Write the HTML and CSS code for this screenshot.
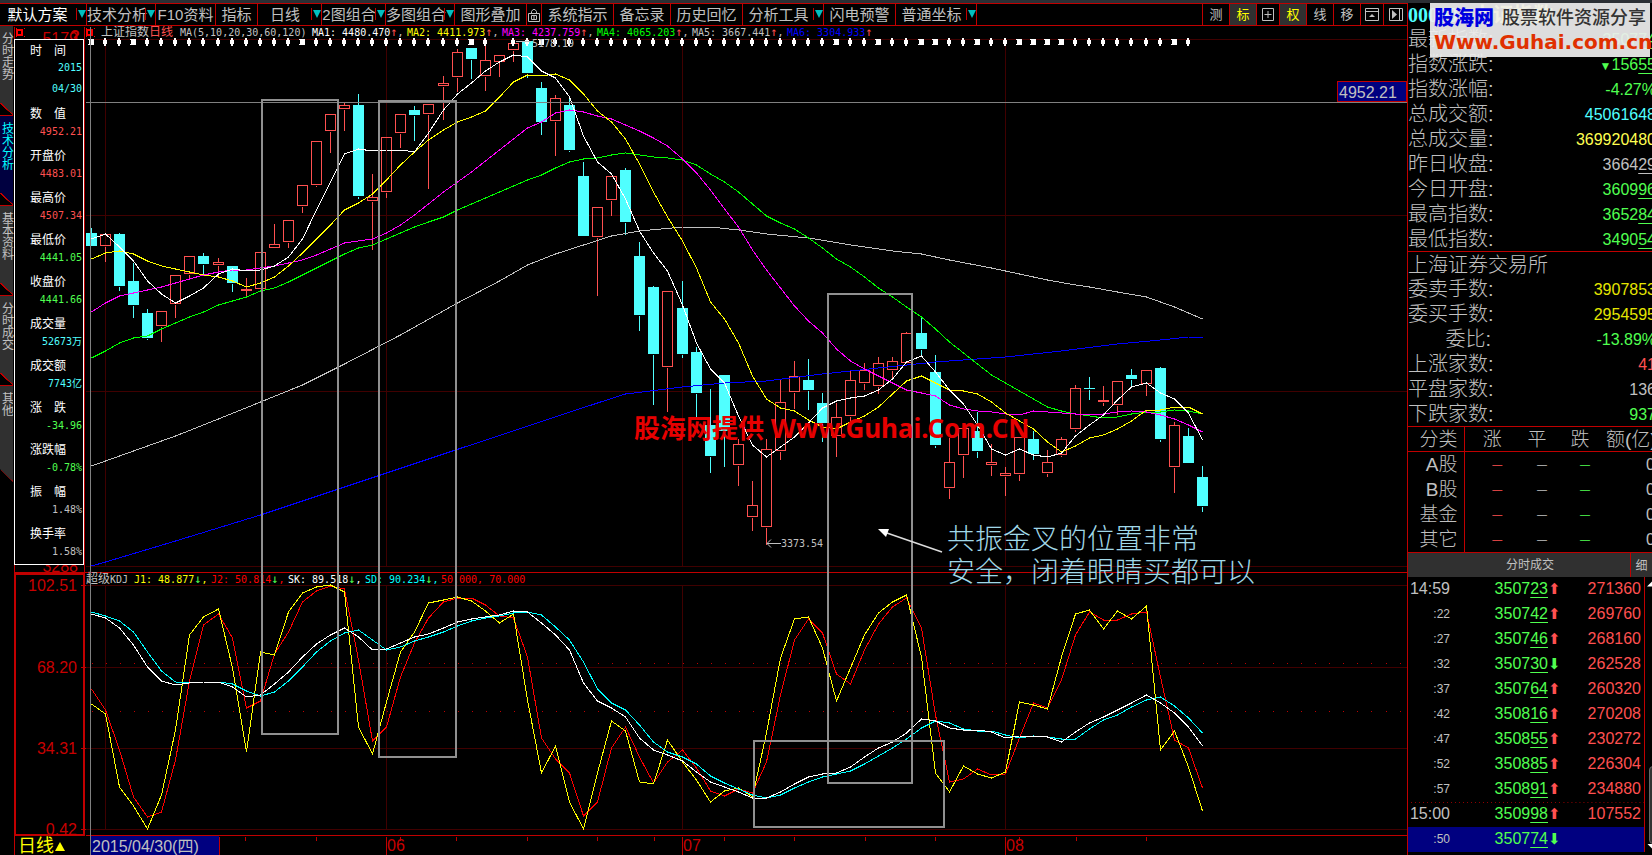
FILE: index.html
```html
<!DOCTYPE html>
<html lang="zh-CN">
  <head>
    <meta charset="utf-8">
    <title>上证指数 日线</title>
    <link rel="stylesheet" href="styles.css">
  </head>
  <body>
    <div class="app">
      <main class="main">
        <nav class="toolbar">
          <button class="drop on">默认方案</button>
          <button class="drop">技术分析</button>
          <button>F10资料</button>
          <button>指标</button>
          <button class="drop">日线</button>
          <button class="drop">2图组合</button>
          <button class="drop">多图组合</button>
          <button>图形叠加</button>
          <button aria-label="锁定"><svg width="12" height="14" viewBox="0 0 12 14"><path d="M3.5 6V3.5L5 1.500h2L8.500 3.500V6M.5 5.500h11v8H.5zM3.500 7.500h5v4h-5zM6 8v3" /></svg></button>
          <button>系统指示</button>
          <button>备忘录</button>
          <button>历史回忆</button>
          <button class="drop">分析工具</button>
          <button>闪电预警</button>
          <button class="drop">普通坐标</button>
          <span></span>
          <button class="small">测</button>
          <button class="small pressed">标</button>
          <button aria-label="四分"><svg width="12" height="13" viewBox="0 0 12 13"><path d="M.5.500h11v12H.5zM6 3v7M2.500 6.500h7" /></svg></button>
          <button class="small pressed">权</button>
          <button class="small">线</button>
          <button class="small">移</button>
          <button aria-label="展开"><svg width="14" height="13" viewBox="0 0 14 13"><path d="M.5.500h13v12H.5zM.5 3.500h13" /><path class="fill" d="M4 9l3-3 3 3z" /></svg></button>
          <button aria-label="右侧"><svg width="14" height="13" viewBox="0 0 14 13"><path d="M.5.500h13v12H.5zM10.500 1v11" /><path class="fill" d="M3 2l5 4.500-5 4.500z" /></svg></button>
        </nav>

        <div class="workspace">
          <div class="tabs">
            <button>分时走势</button>
            <button class="active">技术分析</button>
            <button>基本资料</button>
            <button>分时成交</button>
            <button class="last">其他</button>
          </div>

          <div class="chart">
            <svg id="chart" viewBox="14 26 1393 829"></svg>

            <dl class="info">
              <dt>时　间</dt><dd class="cyan date">2015<br>04/30</dd>
              <dt>数　值</dt><dd class="red">4952.21</dd>
              <dt>开盘价</dt><dd class="red">4483.01</dd>
              <dt>最高价</dt><dd class="red">4507.34</dd>
              <dt>最低价</dt><dd class="green">4441.05</dd>
              <dt>收盘价</dt><dd class="green">4441.66</dd>
              <dt>成交量</dt><dd class="cyan">52673万</dd>
              <dt>成交额</dt><dd class="cyan">7743亿</dd>
              <dt>涨　跌</dt><dd class="green">-34.96</dd>
              <dt>涨跌幅</dt><dd class="green">-0.78%</dd>
              <dt>振　幅</dt><dd>1.48%</dd>
              <dt>换手率</dt><dd>1.58%</dd>
            </dl>
          </div>
        </div>
      </main>

      <aside class="quote">
        <h1><span class="code">000001</span> <span class="name">上证指数</span></h1>
        <dl class="rows">
          <div><dt>最新指数:</dt><dd class="green">3507<u>74</u></dd></div>
          <div><dt>指数涨跌:</dt><dd class="green"><small>▼</small>156<u>55</u></dd></div>
          <div><dt>指数涨幅:</dt><dd class="green">-4.27%</dd></div>
          <div><dt>总成交额:</dt><dd class="cyan">45061648</dd></div>
          <div><dt>总成交量:</dt><dd class="lemon">369920480</dd></div>
          <div><dt>昨日收盘:</dt><dd>3664<u>29</u></dd></div>
          <div><dt>今日开盘:</dt><dd class="green">3609<u>96</u></dd></div>
          <div><dt>最高指数:</dt><dd class="green">3652<u>84</u></dd></div>
          <div><dt>最低指数:</dt><dd class="green">3490<u>54</u></dd></div>
        </dl>
        <dl class="rows line">
          <div><dt>上海证券交易所</dt></div>
          <div><dt>委卖手数:</dt><dd class="gold">3907853</dd></div>
          <div><dt>委买手数:</dt><dd class="gold">2954595</dd></div>
          <div><dt>委比:</dt><dd class="green">-13.89%</dd></div>
          <div><dt>上涨家数:</dt><dd class="red">41</dd></div>
          <div><dt>平盘家数:</dt><dd>136</dd></div>
          <div><dt>下跌家数:</dt><dd class="green">937</dd></div>
        </dl>

        <table class="types">
          <thead><tr><th>分类</th><th>涨</th><th>平</th><th>跌</th><th>额(亿)</th></tr></thead>
          <tbody>
            <tr><th>A股</th><td class="red">—</td><td>—</td><td class="green">—</td><td>0</td></tr>
            <tr><th>B股</th><td class="red">—</td><td>—</td><td class="green">—</td><td>0</td></tr>
            <tr><th>基金</th><td class="red">—</td><td>—</td><td class="green">—</td><td>0</td></tr>
            <tr><th>其它</th><td class="red">—</td><td>—</td><td class="green">—</td><td>0</td></tr>
          </tbody>
        </table>

        <div class="ticks-head"><h2>分时成交</h2><button>细</button></div>
        <div class="ticks">
          <table>
            <tr><td class="min">14:59</td><td>3507<u>23</u></td><td class="red">⬆</td><td>271360</td></tr>
            <tr><td>:22</td><td>3507<u>42</u></td><td class="red">⬆</td><td>269760</td></tr>
            <tr><td>:27</td><td>3507<u>46</u></td><td class="red">⬆</td><td>268160</td></tr>
            <tr><td>:32</td><td>3507<u>30</u></td><td class="green">⬇</td><td>262528</td></tr>
            <tr><td>:37</td><td>3507<u>64</u></td><td class="red">⬆</td><td>260320</td></tr>
            <tr><td>:42</td><td>3508<u>16</u></td><td class="red">⬆</td><td>270208</td></tr>
            <tr><td>:47</td><td>3508<u>55</u></td><td class="red">⬆</td><td>230272</td></tr>
            <tr><td>:52</td><td>3508<u>85</u></td><td class="red">⬆</td><td>226304</td></tr>
            <tr><td>:57</td><td>3508<u>91</u></td><td class="red">⬆</td><td>234880</td></tr>
            <tr class="minute"><td class="min">15:00</td><td>3509<u>98</u></td><td class="red">⬆</td><td>107552</td></tr>
            <tr class="current"><td>:50</td><td>3507<u>74</u></td><td class="green">⬇</td><td></td></tr>
          </table>
          <div class="scroll"><i class="up"></i><i class="thumb"></i><i class="down"></i></div>
        </div>

        <div class="logo">
          <p><b>股海网</b><span>股票软件资源分享</span></p>
          <a href="#">Www.Guhai.com.cn</a>
        </div>
      </aside>
    </div>

    <script src="chart.js"></script>
  </body>
</html>
```
FILE: styles.css
```css
* {
  box-sizing: border-box;
}
body {
  margin: 0;
  background: #000;
  color: #c0c0c0;
  font-family: "Liberation Sans", "Noto Sans CJK SC", sans-serif;
  font-size: 16px;
}
button {
  margin: 0;
  padding: 0;
  border: 0;
  background: none;
  color: inherit;
  font: inherit;
}
dl, dd, h1, h2, p {
  margin: 0;
}
u {
  text-underline-offset: 3px;
  text-decoration-thickness: 1px;
}
.red { color: #ff5050; }
.green { color: #50ff50; }
.cyan { color: #50ffff; }
.lemon { color: #ffff50; }
.gold { color: #e6e600; }

.app {
  display: flex;
  align-items: stretch;
  border-top: 3px solid #2b2f34;
}
.main {
  flex: 1;
  min-width: 0;
}

/* toolbar */
.toolbar {
  display: grid;
  grid-template-columns: 87px 69px 60px 42px 64px 64px 69px 72px 15px 72px 57px 72px 81px 72px 81px 1fr 27px 27px 23px 27px 27px 27px 23px 23px;
  height: 23px;
  border-top: 1px solid #c00000;
  border-bottom: 1px solid #c00000;
}
.toolbar button {
  position: relative;
  border-right: 1px solid #c00000;
  font-size: 15px;
  line-height: 21px;
  white-space: nowrap;
}
.toolbar span {
  border-right: 1px solid #c00000;
}
.toolbar button:last-child {
  border-right: 0;
}
.toolbar .drop {
  padding-right: 9px;
}
.toolbar .on {
  padding-right: 11px;
  color: #fff;
}
.toolbar .drop::before {
  content: "";
  position: absolute;
  right: 9px;
  top: 4px;
  height: 12px;
  border-left: 1px solid #c00000;
}
.toolbar .drop::after {
  content: "";
  position: absolute;
  right: 0;
  top: 6px;
  border: 4px solid transparent;
  border-top: 8px solid #00c0c0;
  border-bottom: 0;
}
.toolbar .small {
  font-size: 13px;
}
.toolbar .pressed {
  background: #303030;
  color: #ffff00;
}
.toolbar svg {
  display: block;
  margin: auto;
  fill: none;
  stroke: #c0c0c0;
}
.toolbar .fill {
  fill: #c0c0c0;
  stroke: none;
}

/* side tabs */
.workspace {
  display: flex;
}
.tabs {
  width: 14px;
}
.tabs button {
  display: block;
  position: relative;
  width: 13px;
  height: 90px;
  padding-top: 6px;
  background: #303030;
  border-bottom: 1px solid #c00000;
  font-size: 12px;
  line-height: 12px;
  writing-mode: vertical-lr;
  text-align: left;
}
.tabs .active {
  background: #000040;
  color: #00ffff;
}
.tabs .last {
  height: 96px;
  border: 0;
  clip-path: polygon(0 0, 100% 0, 100% 100%, 0 83px);
}
.tabs button::after {
  content: "";
  position: absolute;
  left: 0;
  bottom: 0;
  width: 13px;
  height: 12px;
  background: linear-gradient(to top right, #000 47%, #c00000 48%, #c00000 54%, transparent 55%);
}

/* chart */
.chart {
  position: relative;
  flex: 1;
  min-width: 0;
}
.chart svg {
  display: block;
  width: 100%;
  height: auto;
}
.chart text {
  font-family: "Liberation Sans", "Noto Sans CJK SC", sans-serif;
  font-size: 16px;
  fill: #c0c0c0;
}
.chart text.legend {
  font-family: "DejaVu Sans Mono", "Noto Sans CJK SC", monospace;
  font-size: 10px;
  white-space: pre;
}
.chart .legend .cn {
  font-size: 12px;
}
.chart .legend .arrow {
  font-size: 12px;
}
.chart text.scale {
  fill: #c80000;
}
.chart text.note {
  font-size: 28px;
  font-weight: 300;
  fill: #a0d8e8;
}
.chart text.mark {
  font-family: "Noto Sans", "Noto Sans CJK SC", sans-serif;
  font-size: 26px;
  font-weight: 700;
  fill: #e60000;
}
.chart text.period {
  font-size: 18px;
  fill: #ffff00;
}
.crisp {
  shape-rendering: crispEdges;
}
.info {
  position: absolute;
  left: 0;
  top: 13px;
  width: 70px;
  height: 526px;
  padding-top: 3px;
  border: 1px solid #fff;
  background: #000;
  font-family: "DejaVu Sans Mono", "Noto Sans CJK SC", monospace;
  font-size: 10px;
  line-height: 17px;
}
.info dt {
  padding-left: 15px;
  color: #fff;
  font-size: 12px;
  line-height: 17px;
}
.info dd {
  height: 25px;
  padding-right: 1px;
  text-align: right;
  white-space: nowrap;
}
.info .date {
  height: 49px;
  margin-top: -3px;
  line-height: 21px;
}

/* quote panel */
.quote {
  position: relative;
  width: 245px;
  overflow: hidden;
  border-left: 1px solid #c00000;
}
.quote h1 {
  height: 23px;
  font: bold 20px/24px "Liberation Serif", "Noto Sans CJK SC", serif;
  white-space: nowrap;
}
.quote .code {
  color: #50ffff;
}
.quote .name {
  color: #ffff50;
}
.rows div {
  display: flex;
  justify-content: space-between;
  height: 25px;
  line-height: 27px;
  margin-right: -4px;
}
.rows dt {
  width: 83px;
  font-size: 20px;
  font-weight: 300;
  text-align: right;
  white-space: nowrap;
}
.rows small {
  font-size: 12px;
}
.line {
  border-top: 1px solid #c00000;
}
.line div:first-child {
  height: 24px;
}
.line div:first-child dt {
  width: auto;
}
.types {
  width: 260px;
  table-layout: fixed;
  border-collapse: collapse;
}
.types tr {
  height: 25px;
}
.types thead tr {
  border-top: 1px solid #c00000;
  border-bottom: 1px solid #c00000;
}
.types th, .types td {
  height: 25px;
  padding: 2px 0 0;
  line-height: 22px;
  font-weight: 300;
  white-space: nowrap;
}
.types th {
  width: 56px;
  font-size: 19px;
}
.types td {
  padding-left: 10px;
  font-size: 10px;
  text-align: center;
}
.types th:first-child {
  padding-right: 6px;
  border-right: 1px solid #c00000;
  text-align: right;
}
.types th:nth-child(3) { width: 34px; }
.types th:nth-child(4) { width: 52px; }
.types th:last-child {
  width: auto;
  text-align: left;
}
.types td:last-child {
  padding-left: 40px;
  font-size: 16px;
  text-align: left;
}
.ticks-head {
  display: flex;
  height: 25px;
  border-top: 1px solid #c00000;
  background: #303030;
}
.ticks-head h2 {
  flex: 1;
  padding-left: 22px;
  font-size: 12px;
  font-weight: 400;
  line-height: 24px;
  text-align: center;
}
.ticks-head button {
  width: 22px;
  border-left: 1px solid #c00000;
  font-size: 12px;
}
.ticks {
  display: flex;
}
.ticks table {
  width: 236px;
  border-collapse: collapse;
}
.ticks td {
  height: 25px;
  padding: 0;
  line-height: 24px;
  color: #50ff50;
  text-align: right;
}
.ticks td:first-child {
  width: 42px;
  color: #c0c0c0;
  font-size: 12px;
}
.ticks td.min {
  font-size: 16px;
}
.ticks td:nth-child(2) {
  width: 98px;
}
.ticks td:nth-child(3) {
  width: 12px;
  font-family: "DejaVu Sans", sans-serif;
  font-size: 15px;
}
.ticks td.red,
.ticks td:last-child {
  color: #ff5050;
}
.ticks td:last-child {
  padding-right: 3px;
}
.ticks .minute {
  background: linear-gradient(to right, #900000 1px, transparent 1px) 3px 0 / 4px 1px repeat-x;
}
.ticks .current {
  background: #000080;
}
.scroll {
  position: relative;
  flex: 1;
  border-left: 1px solid #c00000;
}
.scroll i {
  position: absolute;
  left: 2px;
  width: 16px;
  height: 8px;
  background: #fff;
}
.scroll .up {
  top: 2px;
  clip-path: polygon(0 100%, 50% 0, 100% 100%);
}
.scroll .down {
  bottom: 0;
  clip-path: polygon(0 0, 100% 0, 50% 100%);
}
.scroll .thumb {
  left: 4px;
  top: 189px;
  height: 78px;
  border: 1px solid #666;
  border-radius: 4px;
  background: #333;
}

/* site logo over the panel */
.logo {
  position: absolute;
  right: 2px;
  top: -1px;
  width: 220px;
  height: 55px;
  padding: 3px 4px;
  background: rgba(238, 238, 238, 0.93);
  white-space: nowrap;
}
.logo p {
  display: flex;
  justify-content: space-between;
  height: 26px;
  line-height: 26px;
}
.logo b {
  color: #0000e0;
  font-size: 20px;
  font-weight: 900;
}
.logo span {
  color: #333;
  font-size: 18px;
  font-weight: 500;
}
.logo a {
  display: block;
  color: #e03000;
  font: bold 20px/22px "DejaVu Sans", sans-serif;
  text-decoration: none;
}
```
FILE: chart.js
```js
var svg = document.getElementById("chart");
var STEP = 14.06;
var html = "";

// up/down, high, body top, body bottom, low
var candles = [
  ["d",227,233,246,246], ["u",232,234,246,261], ["d",232,234,286,290], ["d",262,281,305,317],
  ["d",308,313,338,339], ["u",310,311,326,341], ["u",275,275,304,317], ["u",256,256,274,279],
  ["d",252,256,264,273], ["u",257,262,265,277], ["d",266,266,283,291], ["u",277,289,290,296],
  ["u",251,252,289,289], ["u",223,244,248,248], ["u",220,220,242,247], ["u",184,185,206,212],
  ["u",141,141,185,186], ["u",114,114,131,152], ["u",101,105,109,130], ["d",93,105,196,198],
  ["u",173,197,201,249], ["u",137,137,192,197], ["u",114,114,133,147], ["d",105,110,115,140],
  ["u",104,104,114,188], ["u",75,83,86,119], ["u",48,52,77,91], ["d",48,48,59,78],
  ["u",43,60,76,90], ["u",55,55,62,76], ["u",42,43,50,61], ["d",41,41,73,77],
  ["d",81,88,122,134], ["u",94,98,121,155], ["d",97,105,150,151], ["d",161,176,236,236],
  ["u",207,207,237,295], ["u",175,176,200,215], ["d",167,170,222,234], ["d",241,256,315,330],
  ["d",285,287,354,404], ["u",290,291,367,411], ["d",280,308,354,357], ["d",346,352,393,416],
  ["d",388,425,456,472], ["d",375,375,431,466], ["u",438,444,465,485], ["u",480,505,517,530],
  ["u",438,449,527,544], ["u",379,402,451,459], ["u",360,376,392,408], ["d",358,380,390,409],
  ["d",392,403,423,441], ["u",402,417,436,456], ["u",370,380,416,420], ["u",362,370,383,389],
  ["u",356,363,386,393], ["u",356,361,370,377], ["u",331,333,363,363], ["d",316,333,349,356],
  ["d",354,372,445,447], ["u",437,462,488,498], ["u",428,428,455,477], ["d",411,431,451,457],
  ["u",443,462,465,475], ["u",466,473,476,495], ["u",437,437,474,480], ["d",430,439,454,459],
  ["u",449,462,473,476], ["u",436,439,455,456], ["u",384,388,429,431], ["d",376,388,389,399],
  ["u",385,400,402,405], ["u",380,381,405,414], ["d",368,375,379,386], ["u",369,370,384,395],
  ["d",366,368,439,441], ["u",421,425,467,492], ["d",427,436,463,463], ["d",465,477,506,511]
];

var ma5 = [239,234,247,261,281,294,303,296,288,274,269,271,270,266,257,239,210,182,154,149,151,150,150,152,133,110,94,83,71,62,55,57,71,78,97,136,162,174,199,231,253,271,305,343,369,383,416,445,457,447,437,423,408,401,398,396,390,379,362,356,372,390,404,425,449,455,449,455,457,453,436,425,415,400,387,383,393,399,413,440];
var ma10 = [259,253,251,254,261,266,269,272,275,277,281,287,283,277,266,253,239,225,210,203,194,180,165,152,140,130,122,117,111,97,82,75,76,74,80,94,111,122,139,164,192,217,241,268,302,319,343,376,399,408,411,420,427,429,422,416,407,394,381,376,383,390,391,394,402,413,421,429,442,452,446,438,435,429,421,410,410,407,407,414];
var ma20 = [312,303,296,293,290,287,283,279,275,272,270,270,268,266,263,260,255,249,243,241,239,233,225,215,204,192,182,172,161,150,139,128,122,113,110,112,116,119,125,131,138,146,159,173,190,209,227,250,270,288,306,321,333,349,361,369,376,383,390,393,396,405,409,411,412,414,415,411,412,413,414,414,414,412,411,412,415,419,425,432];
var ma30 = [358,351,343,338,336,329,323,317,312,305,301,297,291,288,282,275,268,261,254,248,245,239,233,227,222,217,210,204,198,192,186,180,175,168,162,159,158,155,153,155,157,158,160,165,174,182,192,204,216,223,229,238,248,259,267,277,288,297,307,317,329,342,353,364,375,383,391,399,407,411,414,416,418,417,414,412,412,410,411,414];
// the slow averages only need a few [index, y] points
var ma60 = [[0,466],[3,451],[6,436],[9,419],[12,402],[15,385],[18,364],[22,335],[26,303],[29,281],[31,265],[33,254],[35,245],[37,236],[39,231],[42,227],[44,227],[46,230],[48,234],[51,238],[54,245],[57,251],[59,254],[61,260],[64,268],[68,280],[70,285],[71,287],[73,292],[75,297],[77,307],[79,319]];
var ma120 = [[0,566],[1,562],[6,541],[12,515],[15,501],[25,454],[36,403],[38,394],[42,387],[45,383],[48,381],[52,374],[56,368],[60,362],[65,357],[69,351],[73,344],[76,340],[78,337],[79,337]];

var j1 = [704,714,787,806,829,795,730,635,617,609,668,752,652,655,612,593,587,585,592,727,754,702,652,632,603,600,597,601,611,623,614,700,773,746,802,829,773,721,731,782,784,740,762,780,802,791,788,797,733,658,619,617,648,701,668,635,613,602,595,657,773,792,766,774,778,772,702,705,709,657,614,610,629,611,619,606,750,731,767,811];
var j2 = [689,710,750,797,817,812,760,681,625,614,638,708,701,654,632,602,591,586,589,660,741,727,677,643,618,602,598,598,605,616,618,657,738,759,773,816,802,748,727,757,783,762,750,768,791,796,789,793,762,695,640,619,633,674,684,650,624,607,598,628,715,782,779,769,775,774,738,703,708,680,635,612,620,620,614,612,677,740,748,788];
var sk = [614,618,628,645,667,681,685,683,682,682,687,697,695,684,672,657,644,635,628,637,650,649,643,637,634,628,622,619,617,615,611,612,623,635,650,683,701,708,717,738,750,755,761,772,782,787,792,798,798,792,784,777,774,773,767,757,748,742,733,719,721,728,730,730,732,738,736,736,737,742,732,723,717,710,703,695,703,713,727,746];
var sd = [612,616,621,632,652,671,682,683,682,682,684,691,696,692,681,667,652,641,633,630,640,650,647,641,637,632,626,621,618,616,613,612,615,627,640,662,689,703,710,725,742,752,757,764,776,783,789,795,798,795,788,782,777,774,771,764,756,748,739,728,721,723,729,731,731,735,738,736,737,739,739,729,720,715,707,700,697,706,718,733];

function px(i) {
  return Math.round(91 + i * STEP);
}
function line(x1, y1, x2, y2, color) {
  html += `<path class="crisp" d="M${x1 + 0.5} ${y1 + 0.5}L${x2 + 0.5} ${y2 + 0.5}" stroke="${color}" fill="none"/>`;
}
function curve(data, color) {
  var points = data.map(function (p, i) {
    return Array.isArray(p) ? px(p[0]) + 0.5 + "," + p[1] : px(i) + 0.5 + "," + p;
  });
  html += `<polyline class="crisp" points="${points.join(" ")}" stroke="${color}" fill="none"/>`;
}
function box(x, y, w, h, stroke, fill, width) {
  html += `<rect class="crisp" x="${x}" y="${y}" width="${w}" height="${h}" stroke="${stroke}" fill="${fill}" stroke-width="${width || 1}"/>`;
}
function text(x, y, str, cls, extra) {
  html += `<text x="${x}" y="${y}" class="${cls || ""}" ${extra || ""}>${str}</text>`;
}

// grid
[39, 215, 391, 566, 585, 667, 748, 829].forEach(function (y) {
  line(85, y, 1407, y, "#400000");
});
[105, 386, 682, 1005].forEach(function (x) {
  line(x, 40, x, 566, "#400000");
  line(x, 585, x, 829, "#400000");
});
for (var i = 0; i < 94; i++) {
  line(px(i), 663, px(i) + 1, 663, "#c00000");
  line(px(i), 711, px(i) + 1, 711, "#c00000");
}

// axes
line(84, 26, 84, 835, "#c00000");
line(14, 26, 14, 855, "#c00000");
line(14, 572, 1407, 572, "#c00000");
box(15, 574, 69, 261, "#c00000", "none", 2);
line(85, 835, 1407, 835, "#c00000");
[["102.51", 585], ["68.20", 667], ["34.31", 748], ["0.42", 829]].forEach(function (s) {
  text(77, s[1] + 6, s[0], "scale", 'text-anchor="end"');
  line(80, s[1], 85, s[1], "#c00000");
});
text(78, 44, "5179", "scale", 'text-anchor="end"');
text(78, 572, "3288", "scale", 'text-anchor="end"');
text(70, 42, "?", "scale", 'font-weight="bold"');
[17, 87].forEach(function (x) {
  box(x, 30, 5, 5, "#ff0000", "none", 2);
  line(x - 2, 28, x - 1, 28, "#ff0000");
  line(x + 6, 28, x + 7, 28, "#ff0000");
  line(x - 2, 36, x - 1, 36, "#ff0000");
  line(x + 6, 36, x + 7, 36, "#ff0000");
});
[245, 316, 400, 456, 527, 597, 654, 724, 794, 865, 935, 1019, 1076, 1146].forEach(function (x) {
  line(x, 836, x, 840, "#c00000");
});
[[386, "06"], [682, "07"], [1005, "08"]].forEach(function (m) {
  line(m[0], 836, m[0], 855, "#c00000");
  text(m[0] + 1, 851, m[1], "scale");
});

// candles
candles.forEach(function (c, i) {
  var x = px(i);
  var color = c[0] == "u" ? "#ff5050" : "#50ffff";
  line(x, c[1], x, c[2], color);
  line(x, c[3], x, c[4], color);
  if (c[0] == "u") {
    box(x - 4.5, c[2] + 0.5, 10, Math.max(c[3] - c[2] - 1, 1), color, "none");
  } else {
    box(x - 5, c[2], 11, c[3] - c[2], "none", color);
  }
});

curve(ma120, "#0000ff");
curve(ma60, "#c0c0c0");
curve(ma30, "#00ff00");
curve(ma20, "#ff00ff");
curve(ma10, "#ffff00");
curve(ma5, "#ffffff");
curve(j2, "#ff0000");
curve(j1, "#ffff00");
curve(sd, "#00ffff");
curve(sk, "#ffffff");

// news markers along the top
var stars = [0, 3, 15, 27, 32, 53, 56, 59, 60, 63, 66, 67, 68, 69, 77];
for (i = 0; i < 79; i++) {
  if (i == 29) continue;
  var x = px(i);
  if (stars.includes(i)) {
    html += `<path d="M${x - 3} 39l6 6m0-6l-6 6" stroke="#fff"/><rect class="crisp" x="${x - 2}" y="39" width="5" height="6" fill="#fff"/>`;
  } else {
    html += `<path class="crisp" d="M${x - 1} 38h2v2h1v4h-1v2h-2v-2h-1v-4h1z" fill="#fff"/>`;
  }
}
text(532, 47, "5178.19", "legend");
line(515, 41, 530, 41, "#c0c0c0");
text(781, 547, "3373.54", "legend");
html += '<path d="M771 539.500l-4 4 4 4M767 543.500h14" stroke="#c0c0c0" fill="none"/>';

// legends
text(101, 36, '<tspan class="cn">上证指数</tspan><tspan class="cn" fill="#ff5050">日线</tspan>', "legend");
text(180, 36, "MA(5,10,20,30,60,120)", "legend");
[["MA1: 4480.470", "#ffffff"], ["MA2: 4411.973", "#ffff00"], ["MA3: 4237.759", "#ff00ff"],
 ["MA4: 4065.203", "#00ff00"], ["MA5: 3667.441", "#c0c0c0"], ["MA6: 3304.933", "#0000ff"]].forEach(function (m, n) {
  text(312 + n * 95, 36, `<tspan fill="${m[1]}">${m[0]}</tspan><tspan class="arrow" fill="#ff5050">↑</tspan>` + (n < 5 ? "," : ""), "legend");
});
text(86, 583, '<tspan class="cn">超级</tspan>KDJ', "legend");
[["J1: 48.877", "#ffff00"], ["J2: 50.814", "#ff0000"], ["SK: 89.518", "#ffffff"], ["SD: 90.234", "#00ffff"]].forEach(function (m, n) {
  text(134 + n * 77, 583, `<tspan fill="${m[1]}">${m[0]}</tspan><tspan class="arrow" fill="#50ff50">↓</tspan><tspan fill="${m[1]}">,</tspan>`, "legend");
});
text(441, 583, '<tspan fill="#ff0000">50.000, 70.000</tspan>', "legend");

// crosshair with its price and date
line(90, 26, 90, 855, "#808080");
line(85, 102, 1407, 102, "#808080");
box(1337.5, 81.5, 69, 20, "#c00000", "#000080");
text(1339, 98, "4952.21");
box(91, 836, 128, 20, "none", "#000080");
line(219, 836, 219, 855, "#c00000");
text(92, 852, "2015/04/30(四)");
text(18, 852, "日线", "period");
html += '<path d="M55 851l5-9 5 9z" fill="#ffff00"/>';

// hand drawn marks
box(262, 100, 76, 634, "#909090", "none", 2);
box(379, 101, 77, 656, "#909090", "none", 2);
box(828, 294, 84, 489, "#909090", "none", 2);
box(754, 741, 190, 86, "#909090", "none", 2);
html += '<path d="M942 552L884 532" stroke="#ddd" stroke-width="1.500"/><path d="M878 529l11 0-3 8z" fill="#fff"/>';
text(947, 549, "共振金叉的位置非常", "note");
text(947, 582, "安全，闭着眼睛买都可以", "note");
text(634, 438, "股海网提供 Www.Guhai.Com.CN", "mark");

svg.innerHTML = html;
```
